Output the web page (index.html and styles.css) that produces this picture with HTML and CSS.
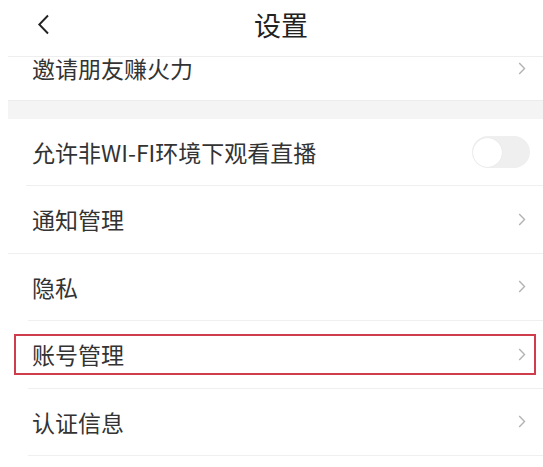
FILE: index.html
```html
<!DOCTYPE html>
<html lang="zh-CN">
<head>
<meta charset="utf-8">
<title>设置</title>
<link rel="stylesheet" href="styles.css">
</head>
<body>
<div class="screen">
  <header class="topbar">
    <span class="back">
      <svg width="13" height="21" viewBox="0 0 13 21"><path d="M11 1.5 L2.3 10.5 L11 19.5" fill="none" stroke="#222" stroke-width="1.9"/></svg>
    </span>
    <h1 class="title">设置</h1>
    <span></span>
  </header>

  <div class="row row-partial">
    <span class="label">邀请朋友赚火力</span>
    <span class="chev"><svg width="8" height="13" viewBox="0 0 8 13"><path d="M1.2 1 L6.5 6.5 L1.2 12" fill="none" stroke="#b3b3b3" stroke-width="1.4"/></svg></span>
  </div>

  <div class="gap"></div>

  <div class="row row-toggle">
    <span class="label">允许非WI-FI环境下观看直播</span>
    <span class="switch"><span class="knob"></span></span>
  </div>

  <div class="row row-full">
    <span class="label">通知管理</span>
    <span class="chev"><svg width="8" height="13" viewBox="0 0 8 13"><path d="M1.2 1 L6.5 6.5 L1.2 12" fill="none" stroke="#b3b3b3" stroke-width="1.4"/></svg></span>
  </div>

  <div class="row">
    <span class="label">隐私</span>
    <span class="chev"><svg width="8" height="13" viewBox="0 0 8 13"><path d="M1.2 1 L6.5 6.5 L1.2 12" fill="none" stroke="#b3b3b3" stroke-width="1.4"/></svg></span>
  </div>

  <div class="row">
    <span class="label">账号管理</span>
    <span class="chev"><svg width="8" height="13" viewBox="0 0 8 13"><path d="M1.2 1 L6.5 6.5 L1.2 12" fill="none" stroke="#b3b3b3" stroke-width="1.4"/></svg></span>
    <span class="highlight"></span>
  </div>

  <div class="row">
    <span class="label">认证信息</span>
    <span class="chev"><svg width="8" height="13" viewBox="0 0 8 13"><path d="M1.2 1 L6.5 6.5 L1.2 12" fill="none" stroke="#b3b3b3" stroke-width="1.4"/></svg></span>
  </div>
</div>
</body>
</html>
```
FILE: styles.css
```css
html, body {
  margin: 0;
  padding: 0;
  background: #ffffff;
  overflow: hidden;
}

body {
  font-family: "Noto Sans CJK SC", "Noto Sans", sans-serif;
  color: #333333;
}

.screen {
  width: 546px;
  margin-left: 8px;
}

.topbar {
  height: 56px;
  border-bottom: 1px solid #eeeeee;
  display: grid;
  grid-template-columns: 1fr auto 1fr;
  align-items: start;
}

.back {
  padding-left: 29px;
  padding-top: 14px;
  display: flex;
}

.title {
  margin: 0;
  padding-top: 7px;
  font-size: 27px;
  font-weight: normal;
  line-height: 36px;
  color: #222222;
}

.row {
  position: relative;
  height: 66.5px;
  border-bottom: 1px solid #efefef;
  margin-left: 20px;
  padding-left: 4px;
  padding-right: 28px;
  display: flex;
  align-items: center;
  justify-content: space-between;
}

.row-full {
  margin-left: 0;
  padding-left: 24px;
}

.row-partial {
  height: 43px;
  border-bottom: none;
  align-items: flex-start;
  margin-left: 0;
  padding-left: 24px;
}

.row-partial .label {
  line-height: 22px;
}

.row-partial .chev {
  margin-top: 5px;
}

.row-toggle {
  height: 66px;
  margin-left: 18px;
  padding-left: 6px;
}

.label {
  font-size: 23px;
  line-height: 30px;
  color: #333333;
}

.chev {
  display: flex;
}

.switch {
  width: 58px;
  height: 32px;
  border-radius: 16px;
  background: #efefef;
  margin-right: -4px;
  display: flex;
  align-items: center;
  padding-left: 1px;
  box-sizing: border-box;
}

.knob {
  width: 29px;
  height: 29px;
  border-radius: 50%;
  background: #ffffff;
  box-shadow: 0 0 1px rgba(0, 0, 0, 0.12);
}

.gap {
  height: 18px;
  background: #f4f4f4;
  border-top: 1px solid #ececec;
}

.highlight {
  position: absolute;
  left: -14px;
  right: 18px;
  top: 13px;
  height: 41px;
  border: 2px solid #cf3d4c;
  box-sizing: border-box;
  pointer-events: none;
}
```
